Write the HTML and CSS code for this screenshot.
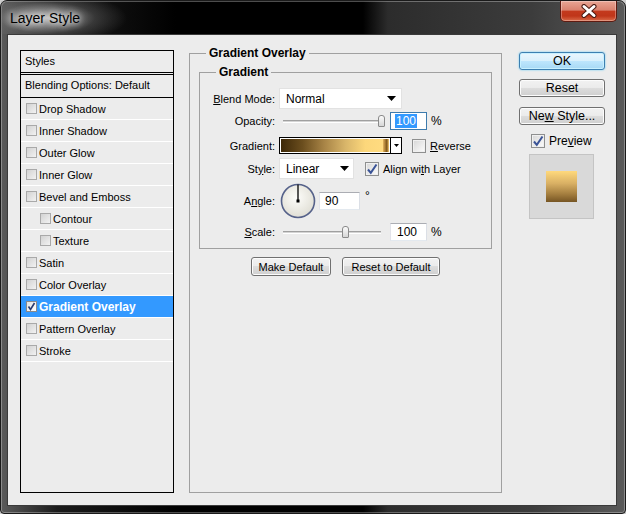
FILE: index.html
```html
<!DOCTYPE html>
<html lang="en">
<head>
    <meta charset="UTF-8">
    <title>Layer Style</title>
    <link rel="stylesheet" href="styles.css">
</head>
<body>
    <div class="window">
        <div class="titlebar">
            <span class="title">Layer Style</span>
            <span class="close">
                <svg width="20" height="14" viewBox="0 0 20 14">
                    <path d="M5 2.5 L15 11.5 M15 2.5 L5 11.5" stroke="#4a1a12" stroke-width="5" stroke-linecap="round" fill="none"/>
                    <path d="M5 2.5 L15 11.5 M15 2.5 L5 11.5" stroke="#fff" stroke-width="3" stroke-linecap="round" fill="none"/>
                </svg>
            </span>
        </div>
        <div class="client">
            <div class="styles-list">
                <div class="list-head">Styles</div>
                <div class="list-blend">Blending Options: Default</div>
                <div class="item"><span class="cb"></span>Drop Shadow</div>
                <div class="item"><span class="cb"></span>Inner Shadow</div>
                <div class="item"><span class="cb"></span>Outer Glow</div>
                <div class="item"><span class="cb"></span>Inner Glow</div>
                <div class="item"><span class="cb"></span>Bevel and Emboss</div>
                <div class="item sub"><span class="cb"></span>Contour</div>
                <div class="item sub"><span class="cb"></span>Texture</div>
                <div class="item"><span class="cb"></span>Satin</div>
                <div class="item"><span class="cb"></span>Color Overlay</div>
                <div class="item selected"><span class="cb on"><svg width="9" height="9" viewBox="0 0 9 9"><path d="M1.5 4.5 L3.5 7.5 L7.5 1" stroke="#2a3a6e" stroke-width="1.6" fill="none"/></svg></span>Gradient Overlay</div>
                <div class="item"><span class="cb"></span>Pattern Overlay</div>
                <div class="item"><span class="cb"></span>Stroke</div>
            </div>

            <fieldset class="group outer">
                <legend>Gradient Overlay</legend>
                <fieldset class="group inner">
                    <legend>Gradient</legend>

                    <div class="row r1">
                        <span class="lbl"><u>B</u>lend Mode:</span>
                        <div class="select blend">Normal<svg class="arrow" width="9" height="5" viewBox="0 0 9 5"><polygon points="0,0 9,0 4.5,5" fill="#000"/></svg></div>
                    </div>

                    <div class="row r2">
                        <span class="lbl">Opacity:</span>
                        <div class="slider"><span class="thumb" style="left: 95px"></span></div>
                        <div class="field focus"><span class="sel">100</span></div>
                        <span class="unit">%</span>
                    </div>

                    <div class="row r3">
                        <span class="lbl">Gradient:</span>
                        <div class="swatch">
                            <div class="swatch-fill"></div>
                            <div class="swatch-drop"><svg width="5" height="3" viewBox="0 0 5 3"><polygon points="0,0 5,0 2.5,3" fill="#000"/></svg></div>
                        </div>
                        <span class="chk reverse"></span>
                        <span class="chk-text"><u>R</u>everse</span>
                    </div>

                    <div class="row r4">
                        <span class="lbl">St<u>y</u>le:</span>
                        <div class="select style">Linear<svg class="arrow" width="9" height="5" viewBox="0 0 9 5"><polygon points="0,0 9,0 4.5,5" fill="#000"/></svg></div>
                        <span class="chk align"><svg width="12" height="12" viewBox="0 0 12 12"><path d="M2 6.5 L4.8 9.8 L10.5 1.5" stroke="#3a5396" stroke-width="2" fill="none"/></svg></span>
                        <span class="chk-text">Align wi<u>t</u>h Layer</span>
                    </div>

                    <div class="row r5">
                        <span class="lbl">A<u>n</u>gle:</span>
                        <svg class="dial" width="36" height="36" viewBox="0 0 36 36">
                            <defs>
                                <radialGradient id="dialFill" cx="45%" cy="40%" r="65%">
                                    <stop offset="0" stop-color="#fdfdfa"/>
                                    <stop offset="1" stop-color="#dedcd2"/>
                                </radialGradient>
                            </defs>
                            <circle cx="18" cy="18" r="16.5" fill="url(#dialFill)" stroke="#56628a" stroke-width="1.6"/>
                            <line x1="18" y1="1.5" x2="18" y2="18" stroke="#000" stroke-width="1.3"/>
                            <rect x="16.5" y="16.5" width="3" height="3" fill="#000"/>
                        </svg>
                        <div class="field angle">90</div>
                        <span class="deg">°</span>
                    </div>

                    <div class="row r6">
                        <span class="lbl"><u>S</u>cale:</span>
                        <div class="slider"><span class="thumb" style="left: 59px"></span></div>
                        <div class="field scale">100</div>
                        <span class="unit">%</span>
                    </div>
                </fieldset>
                <div class="defaults">
                    <button class="btn make">Make Default</button>
                    <button class="btn reset-def">Reset to Default</button>
                </div>
            </fieldset>

            <div class="side">
                <button class="btn side-btn ok">OK</button>
                <button class="btn side-btn gap">Reset</button>
                <button class="btn side-btn gap2">Ne<u>w</u> Style...</button>
                <div class="preview-row">
                    <span class="chk"><svg width="12" height="12" viewBox="0 0 12 12"><path d="M2 6.5 L4.8 9.8 L10.5 1.5" stroke="#3a5396" stroke-width="2" fill="none"/></svg></span>
                    <span class="chk-text">Pre<u>v</u>iew</span>
                </div>
                <div class="preview-box"><div class="preview-swatch"></div></div>
            </div>
        </div>
    </div>
</body>
</html>
```

FILE: styles.css
```css
body {
    margin: 0;
    background: #cfcfcf;
    font-family: "Liberation Sans", Arial, sans-serif;
    font-size: 11px;
    color: #000;
}
.window {
    width: 626px;
    height: 514px;
    box-sizing: border-box;
    display: flex;
    flex-direction: column;
    padding: 0 8px 7px 6px;
    border: 1px solid #1a1a1a;
    border-radius: 7px 7px 4px 4px;
    background: linear-gradient(to right, #5b5b5b 0%, #1b1b1b 9%, #000 28%, #000 58%, #2c2c2c 62%, #3c3c3c 85%, #5a5a5a 100%);
    box-shadow: inset 0 0 0 1px rgba(255, 255, 255, 0.3);
}
.titlebar {
    height: 33px;
    flex-shrink: 0;
    display: flex;
    justify-content: space-between;
    align-items: flex-start;
    margin-left: -6px;
    padding-left: 9px;
    background: radial-gradient(ellipse 80px 26px at 46px 17px, rgba(225, 225, 225, 0.8), rgba(110, 110, 110, 0.4) 60%, rgba(0, 0, 0, 0) 100%);
}
.title {
    margin-top: 9px;
    font-size: 14px;
    line-height: 16px;
    color: #000;
    text-shadow: 0 0 6px #fff, 0 0 10px rgba(255, 255, 255, 0.8);
}
.close {
    width: 57px;
    height: 21px;
    box-sizing: border-box;
    display: flex;
    align-items: center;
    justify-content: center;
    border: 1px solid #5e1a10;
    border-top: none;
    border-radius: 0 0 5px 5px;
    background: linear-gradient(#e8a594 0%, #d9826f 45%, #c3391d 52%, #c0361a 75%, #d96b49 100%);
    box-shadow: inset 0 0 0 1px rgba(255, 255, 255, 0.3);
}
.client {
    flex: 1;
    display: flex;
    align-items: flex-start;
    background: #ececec;
    border: 1px solid #3a3a3a;
}

/* style list */
.styles-list {
    margin: 15px 0 0 12px;
    width: 154px;
    height: 443px;
    box-sizing: border-box;
    border: 1px solid #000;
    flex-shrink: 0;
}
.list-head {
    height: 21px;
    line-height: 21px;
    padding-left: 4px;
    border-bottom: 1px solid #000;
}
.list-blend {
    height: 22px;
    line-height: 21px;
    padding-left: 4px;
    margin-top: 1px;
    border-top: 1px solid #000;
    border-bottom: 1px solid #000;
}
.item {
    height: 21px;
    border-bottom: 1px solid #fff;
    display: flex;
    align-items: center;
    padding-left: 5px;
}
.item.sub {
    padding-left: 19px;
}
.item.selected {
    background: #3399ff;
    color: #fff;
    font-weight: bold;
    font-size: 12px;
}
.cb {
    width: 11px;
    height: 11px;
    box-sizing: border-box;
    margin-right: 2px;
    border: 1px solid #a9a9a9;
    background: linear-gradient(135deg, #d2d2d2, #f2f2f2);
    display: flex;
    align-items: center;
    justify-content: center;
}
.cb.on {
    border-color: #8a8a8a;
    background: linear-gradient(135deg, #e2e2e2, #ffffff);
}

/* group boxes */
.group {
    border: 1px solid #a0a0a0;
    padding: 0;
    margin: 0;
    box-sizing: border-box;
    min-width: 0;
}
.group legend {
    font-weight: bold;
    font-size: 12px;
    line-height: 14px;
    padding: 0 3px;
    margin-left: 16px;
}
.outer {
    margin: 11px 0 0 15px;
    width: 313px;
    height: 447px;
    flex-shrink: 0;
}
.inner {
    margin: 5px 9px 0 9px;
    height: 184px;
    padding-top: 9px;
}
.row {
    display: flex;
    align-items: center;
}
.r1 { height: 21px; }
.r2 { height: 18px; margin-top: 3px; }
.r3 { height: 17px; margin-top: 7px; }
.r4 { height: 21px; margin-top: 4px; }
.r5 { height: 35px; margin-top: 4px; }
.r6 { height: 18px; margin-top: 5px; }
.lbl {
    width: 75px;
    text-align: right;
    margin-right: 4px;
    flex-shrink: 0;
}
.select {
    height: 21px;
    box-sizing: border-box;
    display: flex;
    align-items: center;
    justify-content: space-between;
    padding: 0 5px 0 6px;
    background: #fff;
    border: 1px solid #e2e2e2;
    font-size: 12px;
}
.select.blend { width: 123px; }
.select.style { width: 75px; padding-right: 4px; }
.slider {
    position: relative;
    width: 98px;
    height: 14px;
    margin: 0 9px 0 4px;
}
.slider::before {
    content: "";
    position: absolute;
    left: 0;
    right: 0;
    top: 6px;
    height: 1px;
    background: #d4d4d4;
    border-top: 1px solid #a0a0a0;
    border-bottom: 1px solid #fff;
}
.thumb {
    position: absolute;
    top: 1px;
    width: 7px;
    height: 12px;
    box-sizing: border-box;
    border: 1px solid #8a8a8a;
    border-radius: 3px 3px 1px 1px;
    background: linear-gradient(#fbfbfb, #d6d6d6);
}
.field {
    width: 37px;
    height: 18px;
    box-sizing: border-box;
    display: flex;
    align-items: center;
    padding-left: 5px;
    background: #fff;
    border: 1px solid;
    border-color: #abadb3 #dbdfe6 #e3e9ef #e2e3ea;
    font-size: 12px;
}
.field.focus {
    border-color: #3d7bad;
    padding-left: 4px;
}
.field.angle {
    width: 41px;
    margin-left: 3px;
}
.field.scale {
    padding-left: 6px;
}
.sel {
    background: #3399ff;
    color: #fff;
    line-height: 14px;
    padding: 0 1px;
}
.unit {
    margin-left: 4px;
    font-size: 12px;
}
.deg {
    align-self: flex-start;
    margin: 6px 0 0 5px;
    font-size: 12px;
}
.dial {
    margin-left: 1px;
}
.swatch {
    width: 123px;
    height: 17px;
    box-sizing: border-box;
    display: flex;
    border: 1px solid #000;
}
.swatch-fill {
    flex: 1;
    border: 1px solid #fff;
    background: linear-gradient(to right, #3d2808 0%, #6b4e1e 20%, #a88446 40%, #d9b66a 60%, #fcd77b 78%, #ffdb80 94%, #d3a250 95%, #7d5417 98%, #fbd27a 100%);
}
.swatch-drop {
    width: 10px;
    border-left: 1px solid #000;
    background: #fff;
    display: flex;
    align-items: center;
    justify-content: center;
}
.chk {
    width: 14px;
    height: 14px;
    box-sizing: border-box;
    flex-shrink: 0;
    border: 1px solid #8e8f8f;
    background: linear-gradient(135deg, #d6d6d6, #fdfdfd);
    box-shadow: inset 0 0 0 1px #f0f0f0;
    display: flex;
    align-items: center;
    justify-content: center;
}
.chk.reverse { margin-left: 10px; }
.chk.align { margin-left: 11px; }
.chk-text {
    margin-left: 4px;
}
.defaults {
    display: flex;
    justify-content: center;
    gap: 11px;
    margin-top: 8px;
}

/* buttons */
.btn {
    font-family: inherit;
    font-size: 11px;
    color: #000;
    padding: 0;
    border: 1px solid #707070;
    border-radius: 3px;
    background: linear-gradient(#f2f2f2 0%, #ebebeb 49%, #dddddd 50%, #cfcfcf 100%);
    box-shadow: inset 0 0 0 1px #fcfcfc;
}
.btn.make { width: 80px; height: 19px; }
.btn.reset-def { width: 98px; height: 19px; }
.side {
    margin: 17px 0 0 17px;
    width: 86px;
    display: flex;
    flex-direction: column;
}
.side-btn {
    width: 86px;
    height: 18px;
    font-size: 12.5px;
    line-height: 14px;
}
.side-btn.ok {
    border-color: #3c7fb1;
    background: linear-gradient(#eaf6fd 0%, #d9f0fc 49%, #bee6fd 50%, #a7d9f5 100%);
    box-shadow: 0 0 2px #58c8f8, inset 0 0 0 1px #c8f0ff;
}
.side-btn.gap { margin-top: 9px; }
.side-btn.gap2 { margin-top: 10px; }
.preview-row {
    display: flex;
    align-items: center;
    margin: 9px 0 0 12px;
    height: 14px;
    font-size: 12px;
}
.preview-box {
    margin: 6px 0 0 10px;
    width: 65px;
    height: 65px;
    box-sizing: border-box;
    border: 1px solid #c4c4c4;
    background: #d9d9d9;
    display: flex;
    align-items: center;
    justify-content: center;
}
.preview-swatch {
    width: 31px;
    height: 31px;
    background: linear-gradient(#ffd97c 0%, #d9b064 40%, #a37d3e 75%, #765523 100%);
}
```
